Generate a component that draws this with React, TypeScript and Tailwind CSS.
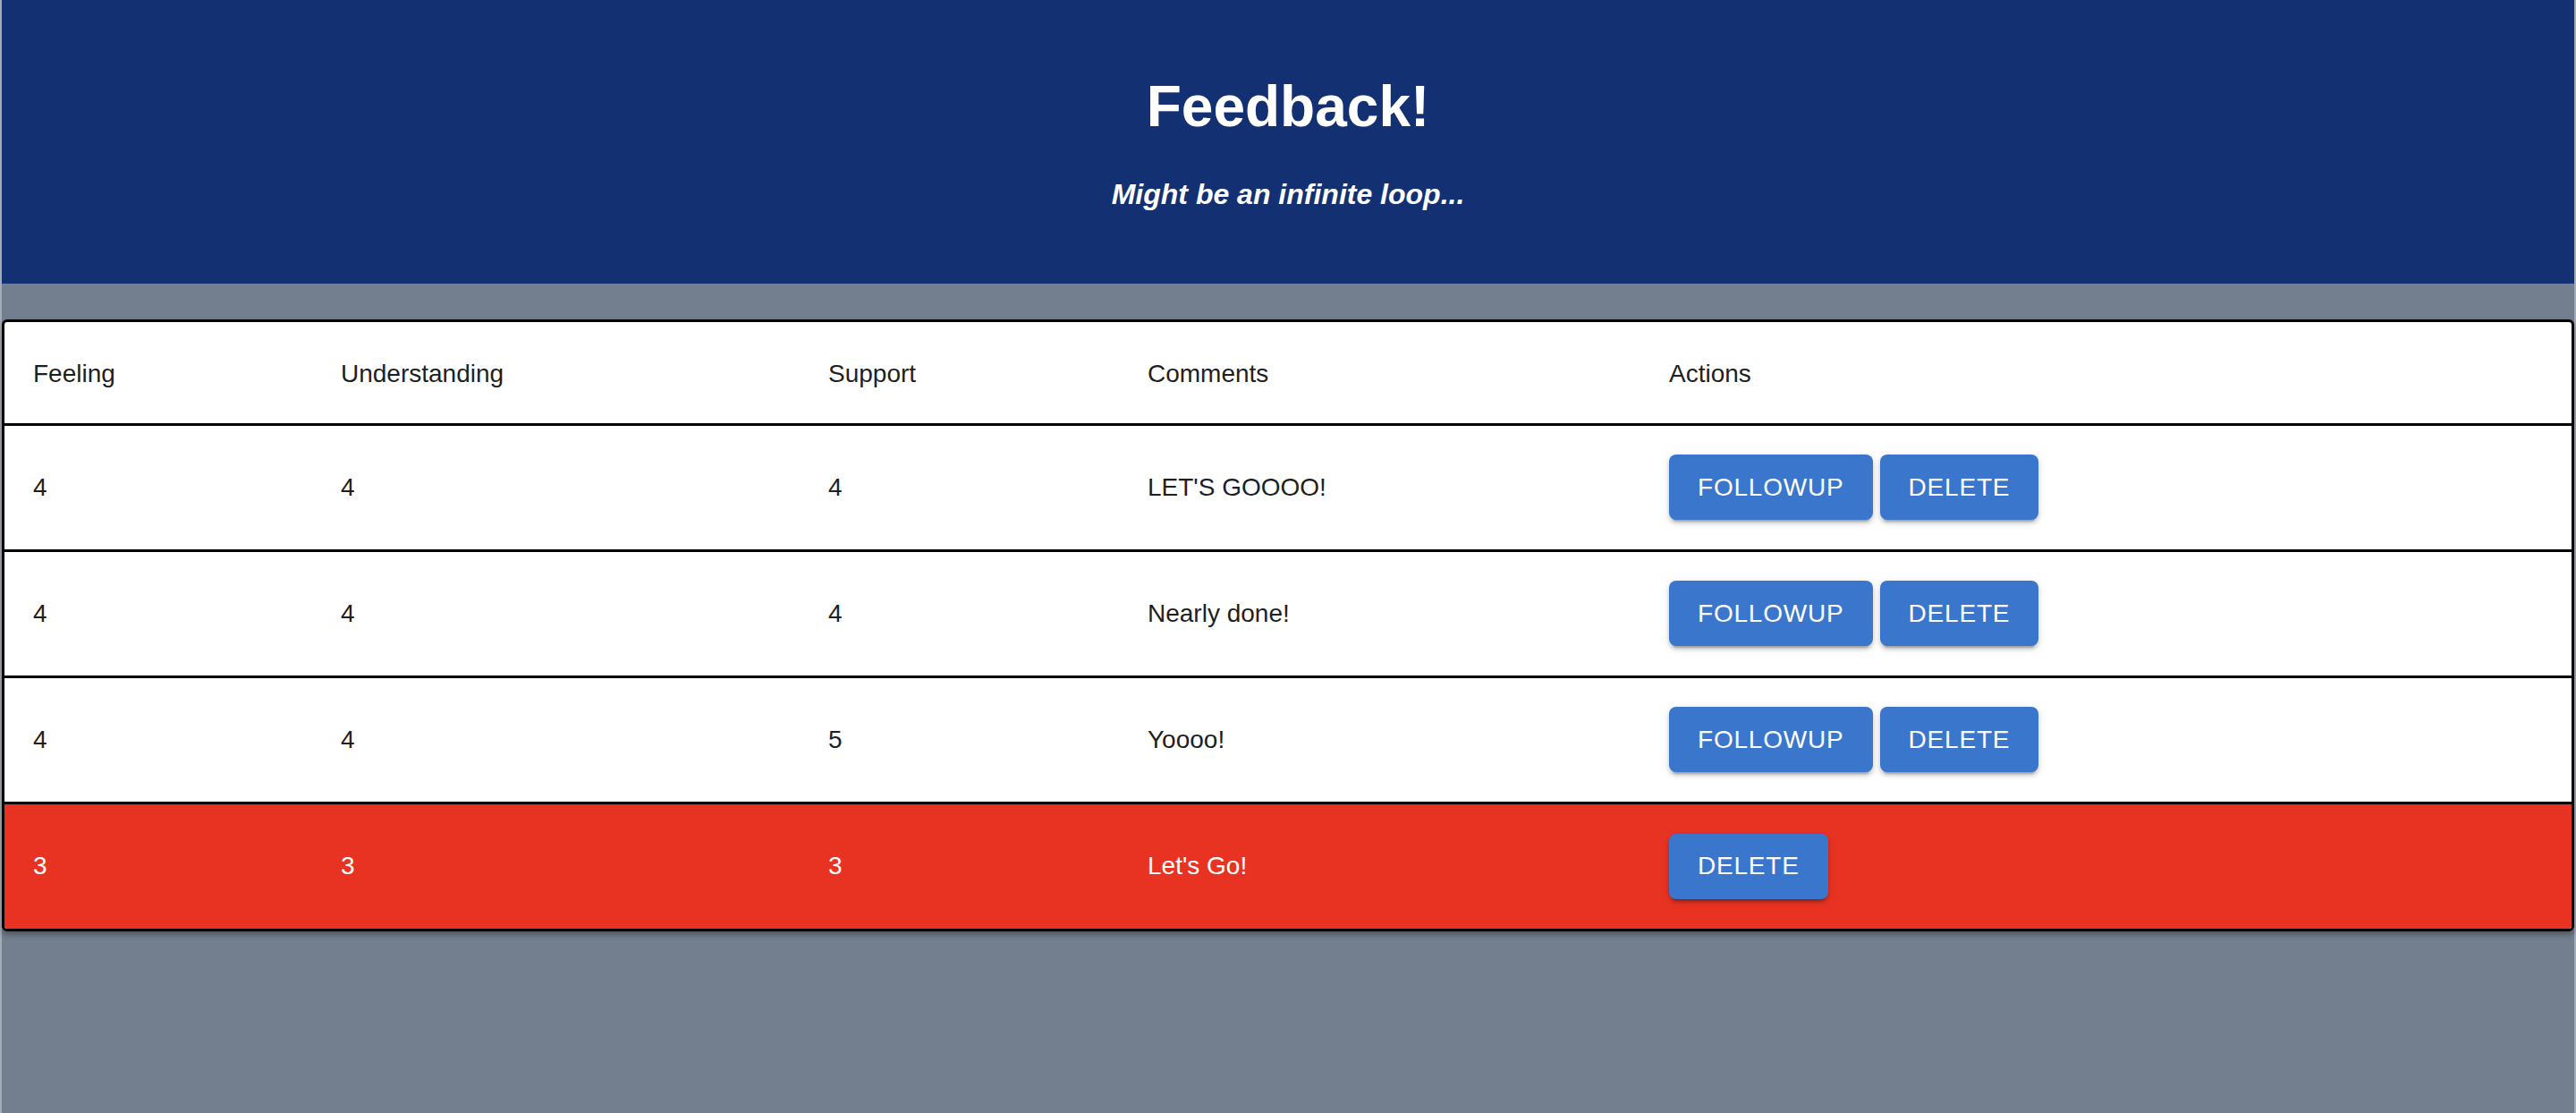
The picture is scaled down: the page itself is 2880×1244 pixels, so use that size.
const rows = [
  { feeling: 4, understanding: 4, support: 4, comments: "LET'S GOOOO!", flagged: false },
  { feeling: 4, understanding: 4, support: 4, comments: 'Nearly done!', flagged: false },
  { feeling: 4, understanding: 4, support: 5, comments: 'Yoooo!', flagged: false },
  { feeling: 3, understanding: 3, support: 3, comments: "Let's Go!", flagged: true },
];

const ActionButton = ({ label }: { label: string }) => (
  <button className="h-[73px] px-[32px] rounded-[8px] bg-[#3a76cc] text-white text-[28px] leading-[40px] tracking-[0.8px] uppercase shadow-[0_6px_2px_-4px_rgba(0,0,0,0.2),0_4px_4px_0_rgba(0,0,0,0.14),0_2px_10px_0_rgba(0,0,0,0.12)]">
    {label}
  </button>
);

const App = () => {
  return (
    <div className="min-h-screen bg-[#737e8e] border-x-2 border-[#a3abb6] font-['Liberation_Sans',Arial,sans-serif]">
      {/* Header */}
      <header className="h-[317px] bg-[#133072] flex flex-col items-center pt-[82px] text-white">
        <h1 className="text-[64px] leading-[74px] font-bold">Feedback!</h1>
        <h4 className="mt-[43px] text-[32px] leading-[37px] font-bold italic">Might be an infinite loop...</h4>
      </header>

      {/* Table */}
      <div className="mt-[40px] border-[3px] border-black rounded-[6px] overflow-hidden bg-white shadow-[0_4px_6px_rgba(0,0,0,0.3)]">
        <table className="w-full table-fixed border-collapse text-[28px] leading-[40px] text-[#1f1f1f]">
          <colgroup>
            <col className="w-[344px]" />
            <col className="w-[545px]" />
            <col className="w-[357px]" />
            <col className="w-[583px]" />
            <col />
          </colgroup>
          <thead>
            <tr className="h-[114px] text-left">
              <th className="px-[32px] pt-[4px] font-normal">Feeling</th>
              <th className="px-[32px] pt-[4px] font-normal">Understanding</th>
              <th className="px-[32px] pt-[4px] font-normal">Support</th>
              <th className="px-[32px] pt-[4px] font-normal">Comments</th>
              <th className="px-[32px] pt-[4px] font-normal">Actions</th>
            </tr>
          </thead>
          <tbody>
            {rows.map((row, i) => (
              <tr
                key={i}
                className={`h-[141px] border-t-[3px] border-black ${row.flagged ? 'bg-[#e83323] text-white' : ''}`}
              >
                <td className="px-[32px]">{row.feeling}</td>
                <td className="px-[32px]">{row.understanding}</td>
                <td className="px-[32px]">{row.support}</td>
                <td className="px-[32px]">{row.comments}</td>
                <td className="px-[32px]">
                  <div className="flex gap-[8px]">
                    {!row.flagged && <ActionButton label="Followup" />}
                    <ActionButton label="Delete" />
                  </div>
                </td>
              </tr>
            ))}
          </tbody>
        </table>
      </div>
    </div>
  );
};

export default App;
